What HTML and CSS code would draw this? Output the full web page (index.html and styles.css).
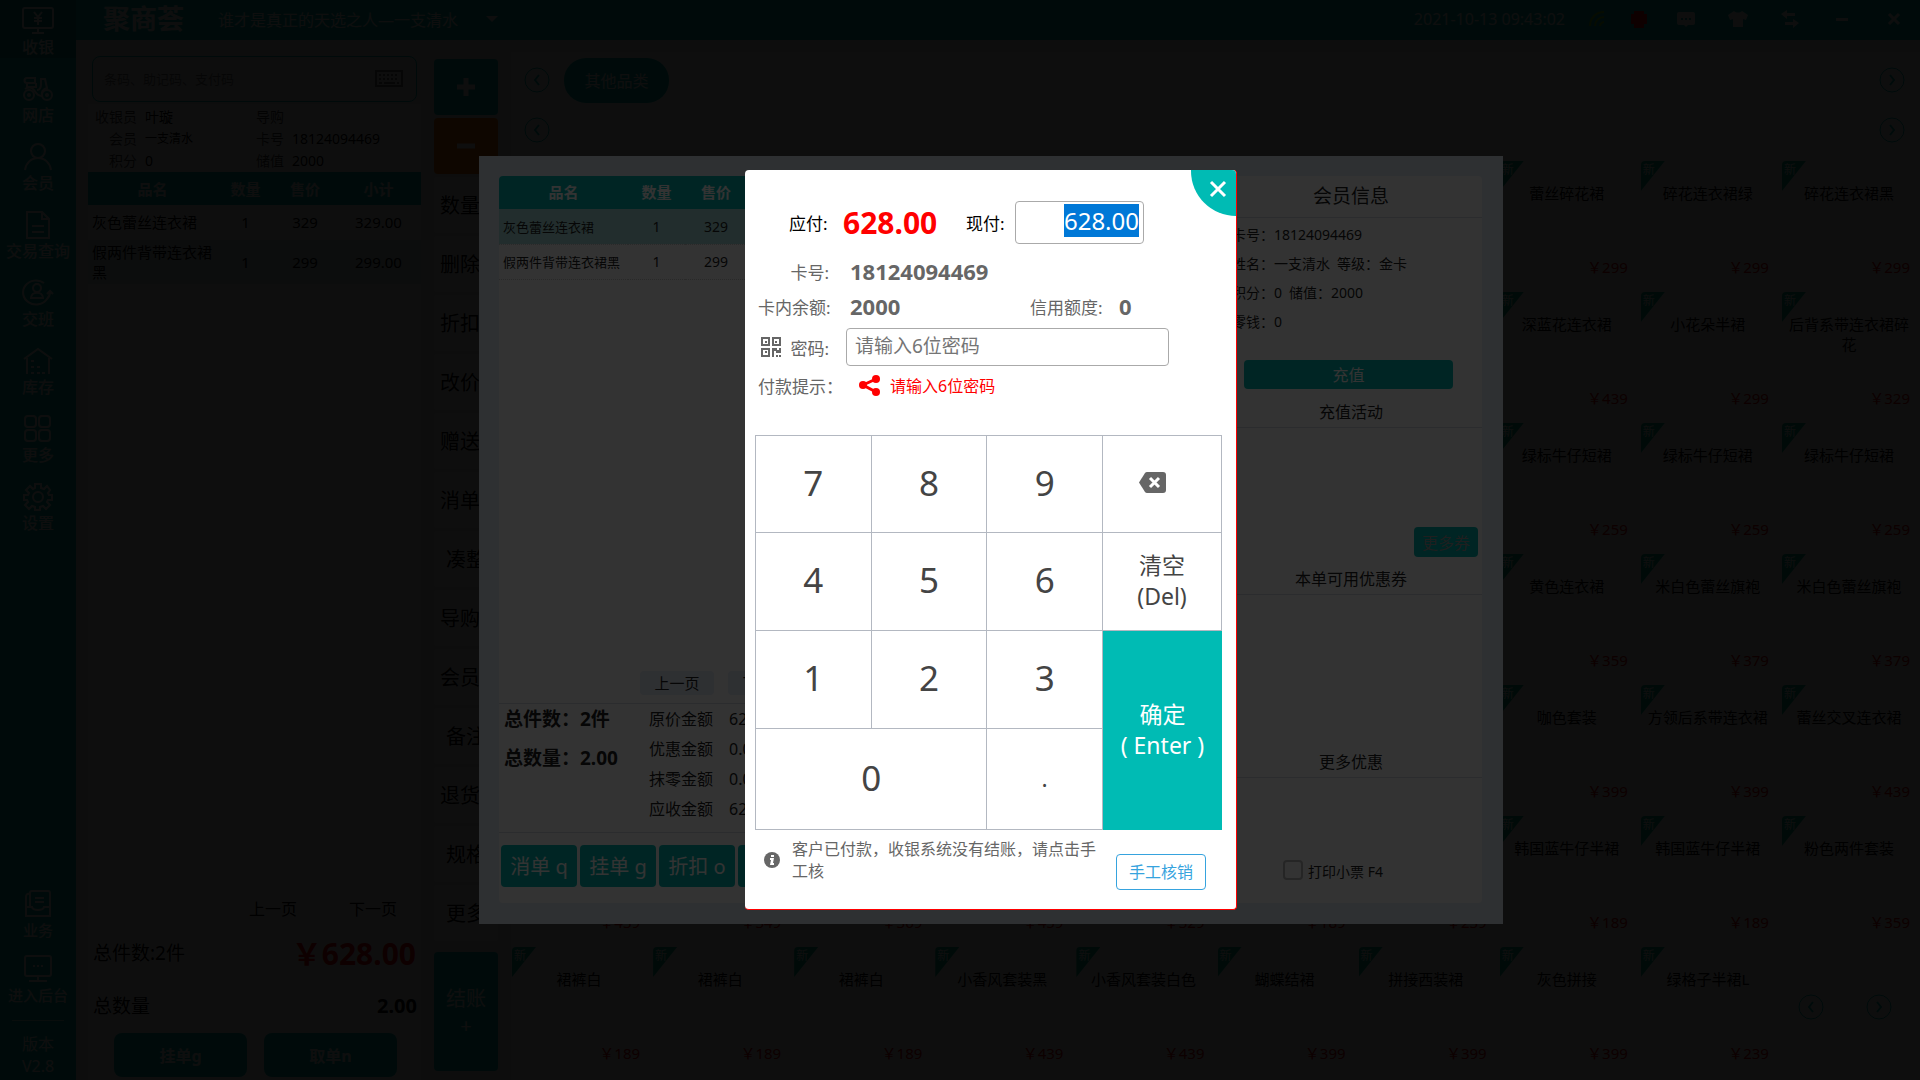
FILE: index.html
```html
<!DOCTYPE html>
<html lang="zh-CN">
<head>
<meta charset="utf-8">
<title>聚商荟收银</title>
<link rel="stylesheet" href="styles.css">
</head>
<body>
<svg class="defs" aria-hidden="true">
  <symbol id="prev" viewBox="0 0 26 26"><circle cx="13" cy="13" r="12"/><path d="M15 8l-4 5 4 5" stroke-width="2"/></symbol>
  <symbol id="next" viewBox="0 0 26 26"><circle cx="13" cy="13" r="12"/><path d="M11 8l4 5-4 5" stroke-width="2"/></symbol>
</svg>

<div class="app">
  <nav class="side">
    <a href="#" class="side-link active"><svg class="ico" viewBox="0 0 28 28"><rect x="-1" y="1" width="30" height="20" rx="2"/><path d="M14 21v5M8 26h12M10 5l4 5 4-5M14 10v8M10 11h8M10 14h8"/></svg>收银</a>
    <a href="#" class="side-link"><svg class="ico" viewBox="0 0 28 28"><circle cx="5" cy="20" r="5"/><circle cx="23" cy="20" r="5"/><circle cx="5" cy="20" r="1"/><circle cx="23" cy="20" r="1"/><path d="M1 14c3-2 7-2 9 1s3 6 8 6c-1-4 1-7 5-8l-2-9h-4v5c0 4-1 6-4 6M3 3h8v5H3a2 2 0 010-5zM3 8v4h9V8"/></svg>网店</a>
    <a href="#" class="side-link"><svg class="ico" viewBox="0 0 28 28"><circle cx="14" cy="8" r="7"/><path d="M1 27c1-7 6-12 13-12s12 5 13 12"/></svg>会员</a>
    <a href="#" class="side-link"><svg class="ico" viewBox="0 0 28 28"><path d="M3 1h15l7 7v19H3zM18 1v7h7M8 15h12M8 21h12"/></svg>交易查询</a>
    <a href="#" class="side-link"><svg class="ico" viewBox="0 0 28 28"><path d="M20 4A13 12 0 1023 20c2-2 3-4 3-7M23 15l3-3 3 3"/><circle cx="13" cy="9" r="4"/><path d="M7 19c0-7 12-7 12 0z"/></svg>交班</a>
    <a href="#" class="side-link"><svg class="ico" viewBox="0 0 28 28"><path d="M0 12L14 2l14 10M3 11v16M25 11v16M7 14h3M7 20h3M13 20h3M7 26h3M13 26h3M18 26h3"/></svg>库存</a>
    <a href="#" class="side-link"><svg class="ico" viewBox="0 0 28 28"><rect x="1" y="1" width="11" height="11" rx="3"/><rect x="15" y="1" width="11" height="11" rx="3"/><rect x="1" y="15" width="11" height="11" rx="3"/><rect x="15" y="15" width="11" height="11" rx="3"/></svg>更多</a>
    <a href="#" class="side-link"><svg class="ico" viewBox="0 0 28 28"><circle cx="14" cy="14" r="5"/><path d="M11 1h6v4l3 1 3-3 3 4-2 3 1 2h3v5h-4l-1 2 3 3-4 4-3-3-3 1v3h-5v-3l-3-1-3 3-4-4 3-3-1-2H0v-5h4l1-2-3-3 4-4 3 3 2-1z"/></svg>设置</a>
    <div class="side-bottom">
      <a href="#" class="side-link low"><svg class="ico" viewBox="0 0 28 28"><path d="M6 17V3a2 2 0 012-2h16a2 2 0 012 2v14M6 4C3 3 2 5 2 7v10M11 8h9M11 12h9M2 17h6c1 4 11 4 12 0h6v9H2z"/></svg>业务</a>
      <a href="#" class="side-link low"><svg class="ico" viewBox="0 0 28 28"><rect x="1" y="1" width="26" height="20" rx="2"/><path d="M14 21v4M5 26h18M9 11h2M13 11h2M17 11h2"/></svg>进入后台</a>
      <p class="version">版本<br>V2.8</p>
    </div>
  </nav>

  <header class="top">
    <strong class="logo">聚商荟</strong>
    <span class="shop">谁才是真正的天选之人—一支清水</span>
    <svg class="caret" viewBox="0 0 12 6"><path d="M0 0h12L6 6z"/></svg>
    <time class="clock">2021-10-13 09:43:02</time>
    <svg class="tray wifi" viewBox="0 0 20 20"><path d="M3 17C3 9 9 3 17 3M8 17c0-5 4-9 9-9M13 17c0-2 2-4 4-4" /></svg>
    <svg class="tray printer" viewBox="0 0 20 20"><path d="M5 2h10v3h3v10h-3v4H5v-4H2V5h3z"/></svg>
    <svg class="tray chat" viewBox="0 0 20 20"><path fill-rule="evenodd" d="M3 3h14a2 2 0 012 2v9a2 2 0 01-2 2h-5l-2 2-2-2H3a2 2 0 01-2-2V5a2 2 0 012-2zm2 6v2h2V9zm4 0v2h2V9zm4 0v2h2V9z"/></svg>
    <svg class="tray shirt" viewBox="0 0 20 20"><path d="M6 2c2 2 6 2 8 0l6 4-2 5-3-1v8H5v-8l-3 1-2-5z"/></svg>
    <svg class="tray swap" viewBox="0 0 20 20"><path d="M7 1v3h8v3H7v3L1 5zM13 10v3H5v3h8v3l6-5z"/></svg>
    <svg class="tray min" viewBox="0 0 20 20"><path d="M4 9h12v3H4z"/></svg>
    <svg class="tray quit" viewBox="0 0 20 20"><path d="M5 5l10 10M15 5L5 15"/></svg>
  </header>

  <main class="work">
    <section class="order">
      <div class="search">
        <input class="search-input" type="text" placeholder="条码、助记码、支付码" aria-label="条码">
        <svg class="keyboard" viewBox="0 0 28 18"><rect x="1" y="1" width="26" height="15"/><path d="M4 5h20M4 9h20" stroke-dasharray="2 2"/><path d="M4 13h3M9 13h11M22 13h2"/></svg>
      </div>
      <dl class="info">
        <dt>收银员</dt><dd>叶璇</dd><dt>导购</dt><dd></dd>
        <dt>会员</dt><dd class="small">一支清水</dd><dt>卡号</dt><dd>18124094469</dd>
        <dt>积分</dt><dd>0</dd><dt>储值</dt><dd>2000</dd>
      </dl>
      <table class="goods">
        <thead><tr><th class="w-name">品名</th><th class="w-num">数量</th><th class="w-price">售价</th><th>小计</th></tr></thead>
        <tbody>
          <tr><td class="name">灰色蕾丝连衣裙</td><td>1</td><td>329</td><td>329.00</td></tr>
          <tr class="picked"><td class="name">假两件背带连衣裙黑</td><td>1</td><td>299</td><td>299.00</td></tr>
        </tbody>
      </table>
      <div class="pager"><button class="page">上一页</button><button class="page">下一页</button></div>
      <div class="sum"><span>总件数:2件</span><strong class="sum-price">￥628.00</strong></div>
      <div class="sum tall"><span>总数量</span><strong class="sum-count">2.00</strong></div>
      <div class="hold"><button class="hold-btn">挂单g</button><button class="hold-btn">取单n</button></div>
    </section>

    <section class="tools">
      <button class="tool plus" aria-label="加"><svg viewBox="0 0 20 20"><path d="M10 1v18M1 10h18"/></svg></button>
      <button class="tool minus" aria-label="减"><svg viewBox="0 0 20 20"><path d="M1 10h18"/></svg></button>
      <button class="tool wide">数量</button>
      <button class="tool wide">删除</button>
      <button class="tool wide">折扣</button>
      <button class="tool wide">改价</button>
      <button class="tool wide">赠送</button>
      <button class="tool wide">消单</button>
      <button class="tool">凑整</button>
      <button class="tool wide">导购</button>
      <button class="tool wide">会员</button>
      <button class="tool">备注</button>
      <button class="tool wide">退货</button>
      <button class="tool">规格</button>
      <button class="tool">更多</button>
      <button class="settle">结账<br>+</button>
    </section>

    <section class="shelf">
      <div class="cats"><svg class="arrow"><use href="#prev"/></svg><button class="cat">其他品类</button><svg class="arrow last"><use href="#next"/></svg></div>
      <div class="cats low"><svg class="arrow"><use href="#prev"/></svg><svg class="arrow last"><use href="#next"/></svg></div>
      <ul class="cards">
        <li class="card c8"><i class="new">新</i><span>蕾丝碎花裙</span><b class="price">￥299</b></li>
        <li class="card"><i class="new">新</i><span>碎花连衣裙绿</span><b class="price">￥299</b></li>
        <li class="card"><i class="new">新</i><span>碎花连衣裙黑</span><b class="price">￥299</b></li>
        <li class="card c8"><i class="new">新</i><span>深蓝花连衣裙</span><b class="price">￥439</b></li>
        <li class="card"><i class="new">新</i><span>小花朵半裙</span><b class="price">￥299</b></li>
        <li class="card"><i class="new">新</i><span>后背系带连衣裙碎花</span><b class="price">￥329</b></li>
        <li class="card c8"><i class="new">新</i><span>绿标牛仔短裙</span><b class="price">￥259</b></li>
        <li class="card"><i class="new">新</i><span>绿标牛仔短裙</span><b class="price">￥259</b></li>
        <li class="card"><i class="new">新</i><span>绿标牛仔短裙</span><b class="price">￥259</b></li>
        <li class="card c8"><i class="new">新</i><span>黄色连衣裙</span><b class="price">￥359</b></li>
        <li class="card"><i class="new">新</i><span>米白色蕾丝旗袍</span><b class="price">￥379</b></li>
        <li class="card"><i class="new">新</i><span>米白色蕾丝旗袍</span><b class="price">￥379</b></li>
        <li class="card c8"><i class="new">新</i><span>咖色套装</span><b class="price">￥399</b></li>
        <li class="card"><i class="new">新</i><span>方领后系带连衣裙</span><b class="price">￥399</b></li>
        <li class="card"><i class="new">新</i><span>蕾丝交叉连衣裙</span><b class="price">￥439</b></li>
        <li class="card"><b class="price">￥439</b></li>
        <li class="card"><b class="price">￥349</b></li>
        <li class="card"><b class="price">￥369</b></li>
        <li class="card"><b class="price">￥459</b></li>
        <li class="card"><b class="price">￥329</b></li>
        <li class="card"><b class="price">￥189</b></li>
        <li class="card"><b class="price">￥239</b></li>
        <li class="card"><i class="new">新</i><span>韩国蓝牛仔半裙</span><b class="price">￥189</b></li>
        <li class="card"><i class="new">新</i><span>韩国蓝牛仔半裙</span><b class="price">￥189</b></li>
        <li class="card"><i class="new">新</i><span>粉色两件套装</span><b class="price">￥359</b></li>
        <li class="card"><i class="new">新</i><span>裙裤白</span><b class="price">￥189</b></li>
        <li class="card"><i class="new">新</i><span>裙裤白</span><b class="price">￥189</b></li>
        <li class="card"><i class="new">新</i><span>裙裤白</span><b class="price">￥189</b></li>
        <li class="card"><i class="new">新</i><span>小香风套装黑</span><b class="price">￥439</b></li>
        <li class="card"><i class="new">新</i><span>小香风套装白色</span><b class="price">￥439</b></li>
        <li class="card"><i class="new">新</i><span>蝴蝶结裙</span><b class="price">￥399</b></li>
        <li class="card"><i class="new">新</i><span>拼接西装裙</span><b class="price">￥399</b></li>
        <li class="card"><i class="new">新</i><span>灰色拼接</span><b class="price">￥399</b></li>
        <li class="card"><i class="new">新</i><span>绿格子半裙L</span><b class="price">￥239</b></li>
        <li class="turn"><svg class="arrow"><use href="#prev"/></svg><svg class="arrow"><use href="#next"/></svg></li>
      </ul>
    </section>
  </main>
</div>

<div class="mask mask-checkout">
  <section class="checkout">
    <div class="bill">
      <table class="bill-table">
        <thead><tr><th class="w-name">品名</th><th class="w-num">数量</th><th class="w-price">售价</th><th></th></tr></thead>
        <tbody>
          <tr class="tint"><td class="name">灰色蕾丝连衣裙</td><td>1</td><td>329</td><td></td></tr>
          <tr><td class="name">假两件背带连衣裙黑</td><td>1</td><td>299</td><td></td></tr>
        </tbody>
      </table>
      <div class="bill-pager"><button class="bill-page">上一页</button><button class="bill-page">下一页</button></div>
      <div class="bill-sum">
        <div class="bill-total"><p>总件数：2件</p><p>总数量：2.00</p></div>
        <dl class="bill-money">
          <dt>原价金额</dt><dd>628.00</dd>
          <dt>优惠金额</dt><dd>0.00</dd>
          <dt>抹零金额</dt><dd>0.00</dd>
          <dt>应收金额</dt><dd>628.00</dd>
        </dl>
      </div>
      <div class="bill-actions"><button class="act">消单 q</button><button class="act">挂单 g</button><button class="act">折扣 o</button><button class="act"></button></div>
    </div>
    <aside class="member">
      <h2 class="member-title">会员信息</h2>
      <div class="member-info"><p>卡号：18124094469</p><p>姓名：一支清水&ensp;等级：金卡</p><p>积分：0&ensp;储值：2000</p><p>零钱：0</p></div>
      <button class="recharge">充值</button>
      <h3 class="sub">充值活动</h3>
      <button class="more">更多券</button>
      <h3 class="sub coupon">本单可用优惠券</h3>
      <h3 class="sub extra">更多优惠</h3>
      <label class="ticket"><input class="tick" type="checkbox">打印小票 F4</label>
    </aside>
  </section>
</div>

<div class="mask mask-pay">
  <form class="pay" role="dialog" aria-label="付款">
    <button type="button" class="close" aria-label="关闭"><svg viewBox="0 0 18 18"><path d="M2 2l14 14M16 2L2 16"/></svg></button>
    <div class="row due-row">
      <span class="due-label">应付:</span><strong class="due">628.00</strong>
      <label class="cash-label" for="cash">现付:</label><input id="cash" class="cash" type="text" value="628.00">
    </div>
    <div class="row card-row"><span class="label">卡号:</span><strong class="value">18124094469</strong></div>
    <div class="row"><span class="label">卡内余额:</span><strong class="value balance">2000</strong><span class="label credit">信用额度:</span><strong class="value">0</strong></div>
    <div class="row pin-row">
      <label class="label pin-label" for="pin"><svg class="qr" viewBox="0 0 20 20"><path d="M1 1h7v7H1zM12 1h7v7h-7zM1 12h7v7H1z"/><path class="fill" d="M4 4h2v2H4zM14 4h2v2h-2zM4 14h2v2H4zM11 11h5v2h2v-2h2v5h-5v-2h-2v6h-2zM15 18h2v2h-2zM18 18h2v2h-2z"/></svg>密码:</label>
      <input id="pin" class="pin" type="text" placeholder="请输入6位密码">
    </div>
    <div class="row tip-row"><span class="tip-label">付款提示：</span><svg class="share" viewBox="0 0 21 21"><path d="M17 4L4 10l13 7"/><circle cx="17" cy="4" r="4"/><circle cx="4" cy="10" r="4"/><circle cx="17" cy="17" r="4"/></svg><span class="tip">请输入6位密码</span></div>
    <div class="keys">
      <button type="button" class="key">7</button><button type="button" class="key">8</button><button type="button" class="key">9</button>
      <button type="button" class="key back" aria-label="退格"><svg viewBox="0 0 27 21"><path class="body" d="M8 0h16a3 3 0 013 3v15a3 3 0 01-3 3H8a3 3 0 01-2-1L0 10.500 6 1a3 3 0 012-1z"/><path class="x" d="M11 6l9 9M20 6l-9 9"/></svg></button>
      <button type="button" class="key">4</button><button type="button" class="key">5</button><button type="button" class="key">6</button>
      <button type="button" class="key word">清空<br>(Del)</button>
      <button type="button" class="key">1</button><button type="button" class="key">2</button><button type="button" class="key">3</button>
      <button type="button" class="key word ok">确定<br>( Enter )</button>
      <button type="button" class="key zero">0</button><button type="button" class="key word">.</button>
    </div>
    <div class="foot">
      <svg class="hint" viewBox="0 0 16 16"><circle cx="8" cy="8" r="8"/><path d="M7 3h3v2H7zM6 6h4L9 11h1v2H6l1-5H6z"/></svg>
      <p class="note">客户已付款，收银系统没有结账，请点击手工核</p>
      <button type="button" class="manual">手工核销</button>
    </div>
  </form>
</div>
<script src="script.js"></script>
</body>
</html>
```
FILE: styles.css
```css
* { box-sizing: border-box; margin: 0; padding: 0; }
:root { --teal: #00bbb4; }
body { font-family: "Noto Sans", "Noto Sans CJK SC", sans-serif; font-size: 16px; color: #000; overflow: hidden; }
button { font: inherit; color: inherit; border: 0; background: none; display: flex; align-items: center; justify-content: center; white-space: nowrap; }
input { font: inherit; }
ul { list-style: none; }
table { border-collapse: collapse; table-layout: fixed; width: 100%; }
svg { flex: none; overflow: visible; }
.defs { position: absolute; width: 0; height: 0; }

/* Shell */
.app { display: grid; grid-template: 40px 1fr / 76px 1fr; height: 100vh; background: #e9e9e9; }
.side { grid-row: 1 / 3; display: flex; flex-direction: column; gap: 10px; background: var(--teal); color: #fff; }
.side-link { display: flex; flex-direction: column; align-items: center; height: 58px; padding-top: 7px; font-weight: 500; line-height: 24px; color: #fff; text-decoration: none; white-space: nowrap; }
.side-link.active { background: #009993; }
.side-link.low { height: 65px; padding: 0; font-size: 15px; }
.ico { width: 28px; height: 28px; fill: none; stroke: currentColor; stroke-width: 2; }
.side-bottom { margin-top: auto; padding-bottom: 3px; }
.version { margin: 0 12px; padding-top: 12px; border-top: 1px solid #9fe0dd; text-align: center; line-height: 22px; }

.top { display: flex; align-items: center; padding: 0 16px 2px 27px; background: var(--teal); color: #fff; }
.logo { width: 115px; font-size: 27px; line-height: 36px; font-weight: 700; }
.caret { width: 12px; height: 6px; margin-left: 28px; fill: #fff; }
.clock { margin: 0 22px 0 auto; }
.tray { width: 20px; height: 20px; margin-right: 32px; fill: #fff; }
.wifi { fill: none; stroke: #7ed321; stroke-width: 2; margin-right: 22px; }
.printer { fill: #f00; margin-right: 27px; }
.quit { fill: none; stroke: #fff; stroke-width: 3; margin-right: 0; }

.work { display: grid; grid-template-columns: 333px 64px 1fr; gap: 13px; padding-left: 12px; min-height: 0; }

/* Current order */
.order { display: flex; flex-direction: column; padding: 16px 0 3px; background: linear-gradient(#e9e9e9 64px, #fff 64px); }
.search { display: flex; align-items: center; height: 46px; margin: 0 4px 4px; padding: 0 13px 0 11px; border: 1px solid var(--teal); border-radius: 8px; }
.search-input { flex: 1; min-width: 0; border: 0; background: none; font-size: 13px; }
.search-input::placeholder { color: #777; }
.keyboard { width: 28px; height: 18px; fill: none; stroke: #777; stroke-width: 2; }
.info { display: grid; grid-template-columns: 49px 103px 28px 1fr; column-gap: 8px; grid-auto-rows: 22px; font-size: 14px; line-height: 22px; }
.info dt { text-align: right; color: #444; }
.small { font-size: 12px; }
.goods { font-size: 15px; line-height: 20px; text-align: center; }
.goods th { height: 33px; background: var(--teal); color: #fff; font-weight: 700; }
.goods td { height: 35px; padding: 0 4px 1px; }
.w-name { width: 129px; }
.w-num { width: 57px; }
.w-price { width: 62px; }
.goods .name, .bill-table .name { text-align: left; white-space: normal; }
.picked { background: #d3e4e8; }
.picked td { height: 44px; }
.pager { display: flex; justify-content: flex-end; gap: 4px; margin: auto 0 10px; }
.page { width: 96px; height: 26px; }
.sum { display: flex; align-items: center; justify-content: space-between; height: 46px; padding: 0 5px 4px; font-size: 19px; }
.sum.tall { height: 56px; padding: 0 4px 0 5px; }
.sum-price { color: #f00; font-size: 30px; }
.sum-count { font-size: 20px; }
.hold { display: flex; gap: 17px; padding: 0 24px 0 26px; }
.hold-btn { flex: 1; height: 44px; border-radius: 8px; background: var(--teal); color: #fff; font-weight: 700; }

/* Tool column */
.tools { display: flex; flex-direction: column; gap: 3px; padding: 19px 0 9px; }
.tool { height: 56px; flex: none; padding-bottom: 2px; border-radius: 4px; background: #fff; font-size: 20px; }
.tool.wide { justify-content: flex-start; padding-left: 6px; }
.tool.plus { padding: 0; background: var(--teal); }
.tool.minus { padding: 0; background: #f97300; }
.tool svg { width: 20px; height: 20px; stroke: #fff; stroke-width: 5; }
.settle { flex: 1; margin-top: 8px; border-radius: 4px; background: var(--teal); color: #fff; font-size: 20px; line-height: 27px; }

/* Product shelf */
.shelf { display: flex; flex-direction: column; margin-top: 12px; padding: 5px 4px 10px 1px; background: #fff; min-width: 0; }
.cats { display: flex; align-items: center; height: 46px; padding: 0 11px 0 12px; gap: 14px; }
.cats.low { height: 54px; margin-bottom: 4px; }
.arrow { width: 26px; height: 26px; fill: none; stroke: var(--teal); }
.arrow.last { margin-left: auto; }
.cat { width: 105px; height: 45px; border-radius: 22px; background: var(--teal); color: #fff; }
.cards { flex: 1; display: grid; grid-template-columns: repeat(10, 1fr); grid-template-rows: repeat(7, 1fr); gap: 8px 7px; }
.card { position: relative; display: flex; flex-direction: column; justify-content: space-between; padding: 22px 6px 7px; border-radius: 4px; background: #f8f8f8; text-align: center; font-size: 15px; line-height: 20px; }
.c8 { grid-column: 8; }
.price { margin-top: auto; text-align: right; font-weight: 400; color: #e00000; }
.new { position: absolute; top: 0; left: 0; width: 24px; height: 30px; padding-left: 2px; border-radius: 4px 0 0 0; background: #00b894; color: #fff; clip-path: polygon(0 0, 100% 0, 0 100%); font-size: 12px; font-style: normal; line-height: 18px; text-align: left; }
.turn { display: flex; align-items: center; justify-content: space-between; padding: 0 24px 4px 16px; }

/* Dialogs */
.mask { position: fixed; inset: 0; padding-left: 62px; display: flex; align-items: center; justify-content: center; }
.mask-checkout { background: rgba(0, 0, 0, .72); }
.mask-pay { background: rgba(0, 0, 0, .8); }

.checkout { display: grid; grid-template-columns: 340px 262px; justify-content: space-between; width: 1024px; max-width: 100%; min-height: 768px; padding: 20px 21px 21px 20px; background: #e6edf8; color: #222; }
.bill { display: flex; flex-direction: column; padding-bottom: 16px; border-radius: 4px; background: #fff; overflow: hidden; }
.bill-table { font-size: 14px; text-align: center; }
.bill-table th { height: 33px; padding-bottom: 2px; background: var(--teal); color: #fff; font-size: 15px; }
.bill-table td { height: 35px; border-bottom: 1px dotted #ccc; }
.bill-table .name { padding-left: 4px; font-size: 13px; white-space: nowrap; }
.tint { background: #a8e2e0; }
.bill-pager { display: flex; gap: 14px; margin: auto 0 8px; padding-left: 141px; }
.bill-page { width: 74px; height: 24px; padding-bottom: 2px; border-radius: 4px; background: #e6edf8; font-size: 15px; }
.bill-sum { display: flex; padding-bottom: 8px; border: solid #d8dde5; border-width: 1px 0; line-height: 30px; }
.bill-total { width: 145px; padding-left: 5px; font-size: 19px; font-weight: 700; }
.bill-total p { margin-bottom: 9px; }
.bill-money { display: grid; grid-template-columns: 80px 1fr; padding-left: 5px; }
.bill-actions { display: flex; gap: 3px; margin-top: 12px; padding-left: 2px; }
.act { width: 76px; height: 42px; padding-bottom: 2px; border-radius: 4px; background: var(--teal); color: #fff; font-size: 20px; }
.member { display: flex; flex-direction: column; border-radius: 4px; background: #fff; }
.member-title { height: 42px; border-bottom: 1px solid #d8dde5; font-size: 19px; font-weight: 400; line-height: 40px; text-align: center; }
.member-info { padding: 2px 0 24px 12px; font-size: 14px; line-height: 29px; }
.recharge { width: 209px; height: 29px; margin-left: 24px; padding-bottom: 2px; border-radius: 4px; background: var(--teal); color: #fff; }
.sub { margin-top: 8px; border-bottom: 1px solid #d8dde5; font-size: 16px; font-weight: 400; line-height: 30px; text-align: center; }
.more { align-self: flex-end; width: 64px; height: 30px; margin: 99px 4px 0 0; border-radius: 4px; background: var(--teal); color: #999; }
.sub.coupon { margin-top: 7px; }
.sub.extra { margin-top: 152px; }
.ticket { display: flex; gap: 5px; margin: 82px 0 0 63px; font-size: 14px; line-height: 24px; }
.tick { appearance: none; width: 20px; height: 20px; border: 2px solid #b8b8b8; border-radius: 4px; }

/* Payment */
.pay { position: relative; width: 492px; max-width: 100%; min-height: 740px; padding-top: 31px; border: solid #f00; border-width: 0 1px 1px 0; border-radius: 4px; background: #fff; color: #666; font-size: 17px; }
.close { position: absolute; top: 0; right: 0; width: 45px; height: 46px; padding: 0 0 8px 8px; border-radius: 0 4px 0 45px; background: var(--teal); }
.close svg { width: 18px; height: 18px; stroke: #fff; stroke-width: 3; }
.row { display: flex; align-items: center; height: 28px; margin-top: 7px; padding-left: 13px; }
.due-row { height: 43px; margin: 0 0 13px; padding-left: 44px; color: #000; }
.due-label { width: 54px; }
.due { width: 123px; color: #f00; font-size: 30px; }
.cash-label { width: 49px; }
.cash { width: 129px; height: 43px; padding: 0 4px 4px; border: 1px solid #aaa; border-radius: 4px; outline: 0; font-size: 24px; text-align: right; color: #333; }
.cash::selection { background: #0078d7; color: #fff; }
.card-row { margin-top: 0; }
.label { width: 71px; margin-right: 21px; text-align: right; white-space: nowrap; }
.value { font-size: 22px; }
.balance { width: 180px; }
.credit { margin-right: 18px; }
.pin-row { height: 38px; margin-top: 8px; }
.pin-label { display: flex; align-items: center; justify-content: space-between; margin-right: 17px; padding-left: 3px; }
.qr { width: 20px; height: 20px; fill: none; stroke: #666; stroke-width: 2; }
.qr .fill { fill: #666; stroke: none; }
.pin { width: 323px; height: 38px; padding: 0 8px 2px; border: 1px solid #aaa; border-radius: 4px; font-size: 19px; }
.pin::placeholder { color: #757575; }
.tip-row { margin-top: 5px; }
.tip-label { width: 101px; white-space: nowrap; }
.share { width: 21px; height: 21px; margin-right: 10px; fill: #f00; }
.share path { fill: none; stroke: #f00; stroke-width: 3; }
.tip { color: #f00; font-size: 16px; }
.keys { display: grid; grid-template-columns: 1fr 1fr 1fr 118px; grid-template-rows: 96px 97px 97px 100px; gap: 1px; margin: 36px 14px 0 10px; padding: 1px; background: #b3b8c1; }
.key { padding-bottom: 4px; background: #fff; color: #444; font-size: 35px; }
.key.word { padding-bottom: 2px; font-size: 23px; line-height: 31px; }
.key.back { padding-right: 18px; }
.back svg { width: 27px; height: 21px; }
.body { fill: #666; }
.x { stroke: #fff; stroke-width: 3; }
.key.ok { grid-row: 3 / 5; grid-column: 4; margin: 0 -1px -1px 0; background: var(--teal); color: #fff; }
.zero { grid-column: 1 / 3; }
.foot { display: flex; align-items: flex-start; padding: 8px 30px 0 19px; }
.hint { width: 16px; height: 16px; margin: 14px 12px 0 0; fill: #666; }
.hint path { fill: #fff; }
.note { width: 306px; font-size: 16px; line-height: 22px; }
.manual { width: 90px; height: 36px; margin: 16px 0 0 auto; padding-bottom: 2px; border: 1px solid #36a3de; border-radius: 4px; color: #36a3de; font-size: 16px; }
```
FILE: script.js
```js
// The amount is ready to be typed over as soon as the dialog opens.
const cash = document.getElementById("cash");
cash.focus();
cash.select();
```
